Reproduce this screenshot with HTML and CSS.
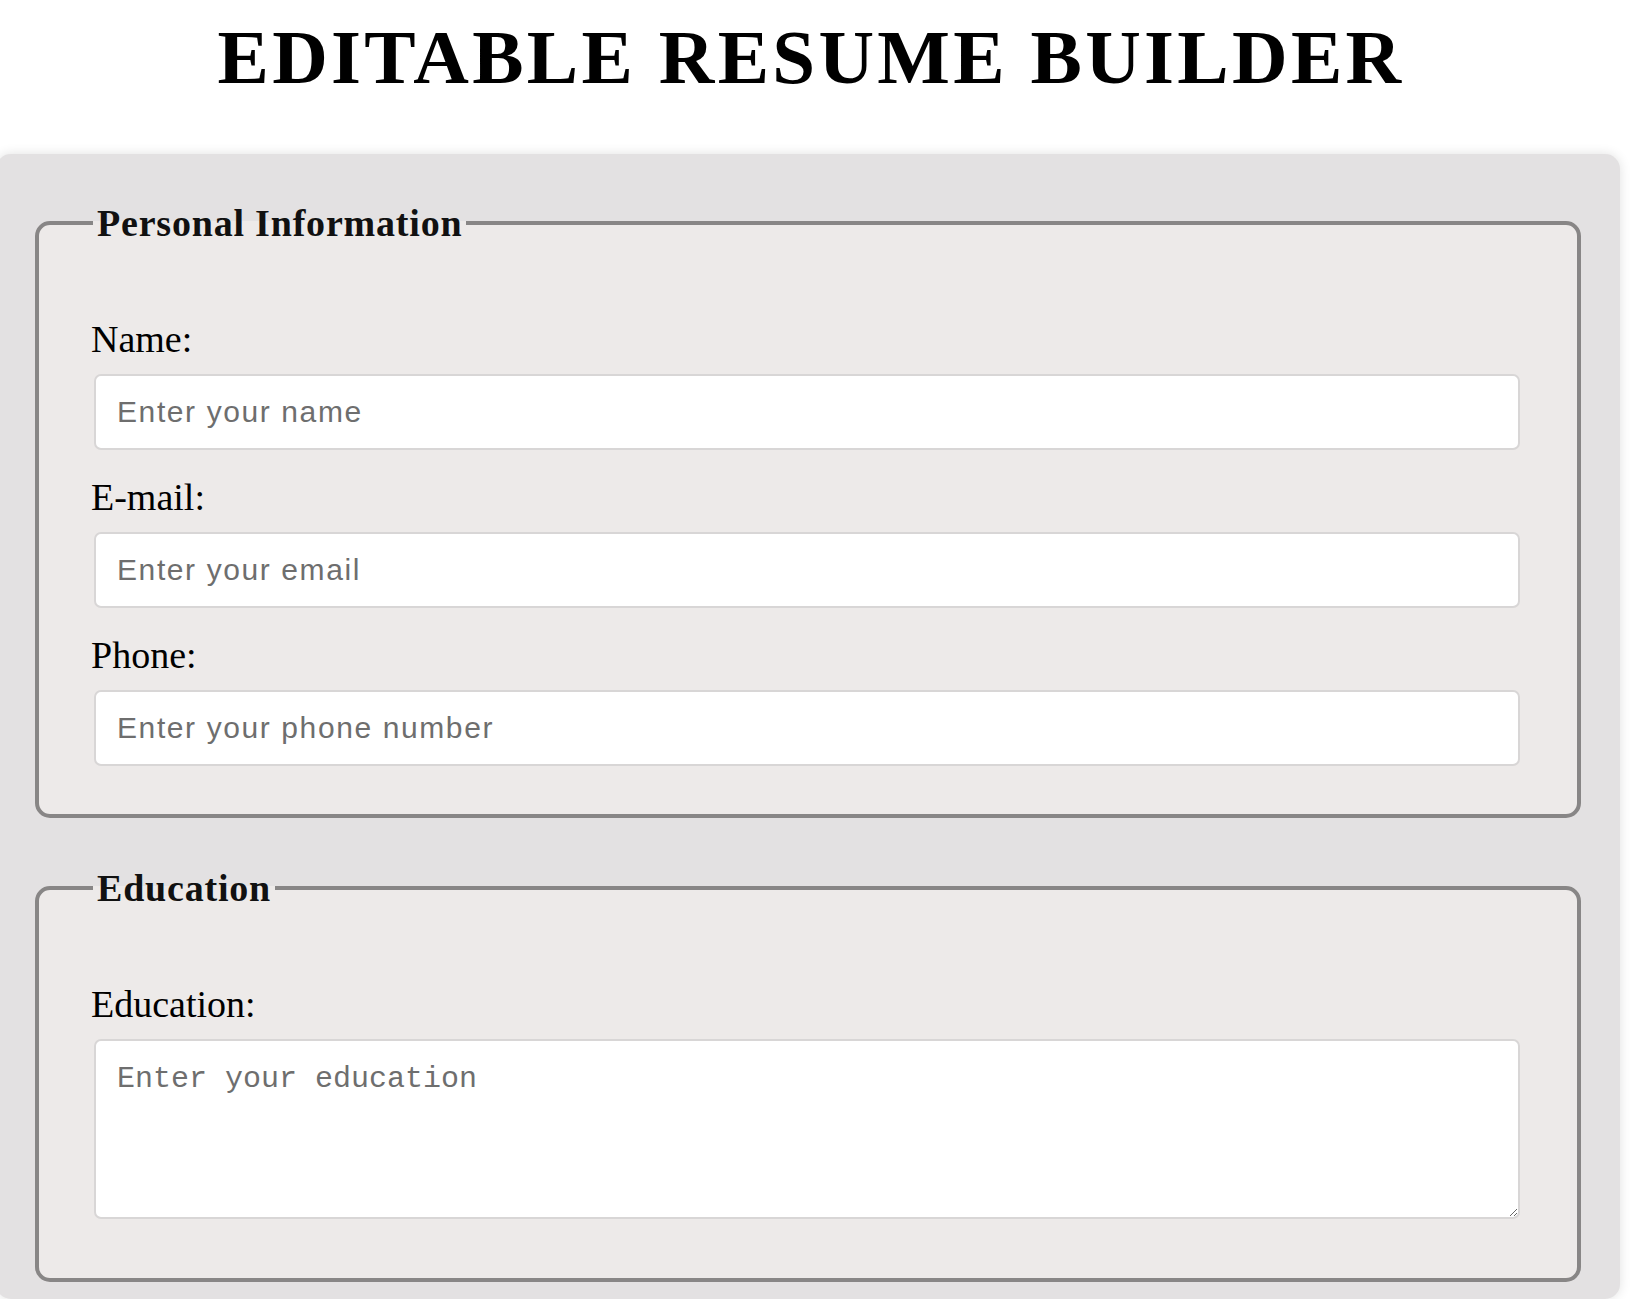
FILE: index.html
```html
<!DOCTYPE html>
<html lang="en">
<head>
<meta charset="utf-8">
<title>Editable Resume Builder</title>
<link rel="stylesheet" href="styles.css">
</head>
<body>
<h1 class="title">EDITABLE RESUME BUILDER</h1>
<div class="container">
  <form class="resume-form">
    <fieldset class="section">
      <legend class="section-title">Personal Information</legend>
      <label class="field-label" for="name">Name:</label>
      <input class="field-input" id="name" type="text" placeholder="Enter your name">
      <label class="field-label" for="email">E-mail:</label>
      <input class="field-input" id="email" type="email" placeholder="Enter your email">
      <label class="field-label" for="phone">Phone:</label>
      <input class="field-input" id="phone" type="tel" placeholder="Enter your phone number">
    </fieldset>
    <fieldset class="section">
      <legend class="section-title">Education</legend>
      <label class="field-label" for="education">Education:</label>
      <textarea class="field-textarea" id="education" placeholder="Enter your education"></textarea>
    </fieldset>
  </form>
</div>
</body>
</html>
```
FILE: styles.css
```css
html, body {
  margin: 0;
  padding: 0;
  overflow: hidden;
  background: #ffffff;
}

body {
  font-family: "Liberation Serif", "Times New Roman", serif;
  color: #000;
}

.title {
  margin: 13px 0 52px 0;
  padding: 0 9px 0 0;
  text-align: center;
  font-family: "Liberation Serif", "Times New Roman", serif;
  font-weight: bold;
  font-size: 77px;
  line-height: normal;
  letter-spacing: 3.3px;
  color: #000;
}

.container {
  margin: 0 11px 0 -4px;
  padding: 47px 39px 17px 39px;
  background: #e3e1e2;
  border-radius: 15px;
  box-shadow: 0 0 12px rgba(0, 0, 0, 0.12);
}

.resume-form {
  margin: 0;
}

.section {
  margin: 0 0 48px 0;
  min-width: 0;
  padding: 72px 57px 23px 55px;
  background: #edeae9;
  border: 4px solid #888686;
  border-radius: 15px;
}

.section:last-child {
  margin-bottom: 0;
}

.section-title {
  margin-left: -1px;
  padding: 0 4px;
  font-family: "Liberation Serif", "Times New Roman", serif;
  font-weight: bold;
  font-size: 38px;
  letter-spacing: 0.8px;
  color: #111;
}

.field-label {
  display: block;
  margin: 0 0 13px -3px;
  font-family: "Liberation Serif", "Times New Roman", serif;
  font-size: 38px;
  line-height: 44px;
  color: #000;
}

.field-input {
  display: block;
  box-sizing: border-box;
  width: 100%;
  height: 76px;
  margin: 0 0 25px 0;
  padding: 0 21px;
  background: #fff;
  border: 2px solid #d8d6d6;
  border-radius: 7px;
  font-family: "Liberation Sans", Arial, sans-serif;
  font-size: 30px;
  letter-spacing: 1.6px;
  color: #000;
  outline: none;
}

.field-input::placeholder {
  color: #6e6e6e;
}

.field-textarea {
  display: block;
  box-sizing: border-box;
  width: 100%;
  height: 180px;
  margin: 0 0 36px 0;
  padding: 21px;
  background: #fff;
  border: 2px solid #d8d6d6;
  border-radius: 7px;
  font-family: "Liberation Mono", "Courier New", monospace;
  font-size: 30px;
  color: #000;
  outline: none;
}

.field-textarea::placeholder {
  color: #6e6e6e;
}
```
